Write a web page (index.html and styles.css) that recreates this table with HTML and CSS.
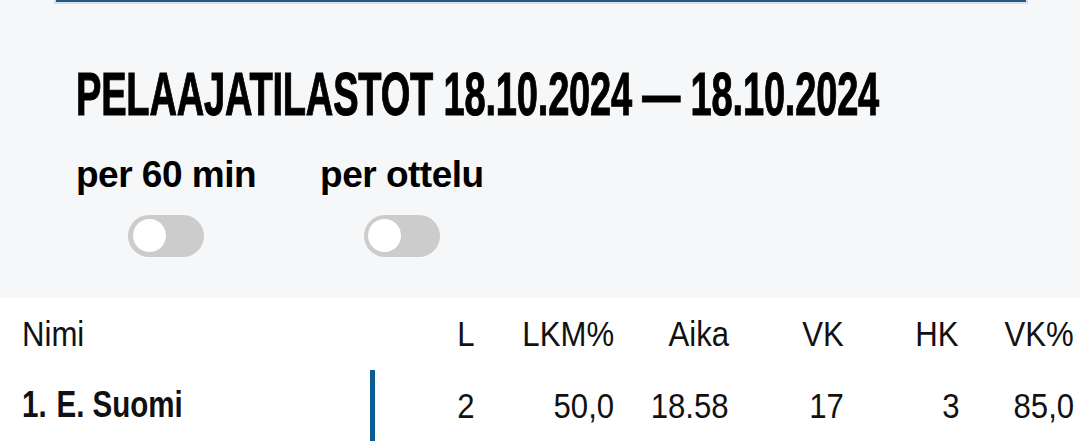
FILE: index.html
```html
<!DOCTYPE html>
<html lang="fi">
<head>
<meta charset="utf-8">
<title>Pelaajatilastot</title>
<link rel="stylesheet" href="styles.css">
</head>
<body>
<section class="stats-head">
  <div class="topbar"></div>
  <h1 class="title"><span class="title-text">PELAAJATILASTOT 18.10.2024 — 18.10.2024</span></h1>
  <div class="switches">
    <label class="switch">
      <span class="switch-label">per 60 min</span>
      <span class="track"><span class="knob"></span></span>
    </label>
    <label class="switch">
      <span class="switch-label">per ottelu</span>
      <span class="track"><span class="knob"></span></span>
    </label>
  </div>
</section>
<section class="table-wrap">
  <table class="stats">
    <colgroup>
      <col class="c-name"><col class="c-l"><col class="c-lkm"><col class="c-std"><col class="c-std"><col class="c-std"><col class="c-std">
    </colgroup>
    <thead>
      <tr>
        <th class="name"><span class="txt">Nimi</span></th>
        <th><span class="txt">L</span></th>
        <th><span class="txt">LKM%</span></th>
        <th><span class="txt">Aika</span></th>
        <th><span class="txt">VK</span></th>
        <th><span class="txt">HK</span></th>
        <th><span class="txt">VK%</span></th>
      </tr>
    </thead>
    <tbody>
      <tr>
        <td class="name"><span class="txt"><span class="rank">1.</span><span class="player">E. Suomi</span></span></td>
        <td><span class="txt">2</span></td>
        <td><span class="txt">50,0</span></td>
        <td><span class="txt">18.58</span></td>
        <td><span class="txt">17</span></td>
        <td><span class="txt">3</span></td>
        <td><span class="txt">85,0</span></td>
      </tr>
    </tbody>
  </table>
</section>
</body>
</html>
```

FILE: styles.css
```css
html, body {
  margin: 0;
  padding: 0;
  background: #ffffff;
  overflow: hidden;
}

body {
  font-family: "Liberation Sans", Arial, sans-serif;
  color: #111;
}

.stats-head {
  background: #f6f7f9;
  padding: 0 0 41px 76px;
}

.topbar {
  margin: 0 52px 0 -22px;
  height: 1.5px;
  background: #22588a;
  border: 2px solid #d7dee6;
  border-top: 0;
}

.title {
  margin: 70px 0 0 0;
  height: 40px;
  font-family: "Liberation Sans", Arial, sans-serif;
  font-weight: 700;
  font-size: 40px;
  line-height: 40px;
  color: #000;
  white-space: nowrap;
}

.title-text {
  display: inline-block;
  transform: scale(0.951, 1.52);
  transform-origin: left center;
  letter-spacing: -0.2px;
  -webkit-text-stroke: 0.7px #000;
}

.switches {
  display: flex;
  gap: 64px;
  margin-top: 42px;
}

.switch {
  display: flex;
  flex-direction: column;
  align-items: center;
  gap: 22px;
}

.switch-label {
  font-family: "Liberation Sans", Arial, sans-serif;
  font-weight: 700;
  font-size: 37px;
  line-height: 37px;
  letter-spacing: -0.5px;
  color: #000;
  white-space: nowrap;
}

.track {
  display: flex;
  align-items: center;
  box-sizing: border-box;
  width: 76px;
  height: 42px;
  padding: 0 4.5px;
  border-radius: 21px;
  background: #cccccc;
}

.knob {
  width: 33px;
  height: 33px;
  border-radius: 50%;
  background: #ffffff;
}

.table-wrap {
  overflow: hidden;
  background: #ffffff;
}

.stats {
  border-collapse: separate;
  border-spacing: 0;
  table-layout: fixed;
  width: 1080px;
}

.c-name { width: 375px; }
.c-l { width: 105px; }
.c-lkm { width: 140px; }
.c-std { width: 115px; }

.stats th,
.stats td {
  padding: 0 6px 0 0;
  height: 72px;
  text-align: right;
  font-size: 35px;
  line-height: 72px;
  font-weight: 400;
  white-space: nowrap;
  vertical-align: top;
}

.txt {
  display: inline-block;
  transform: scaleX(0.89);
  transform-origin: right center;
}

.stats th.name,
.stats td.name {
  text-align: left;
  padding-left: 22px;
  border-right: 5px solid transparent;
}

.stats th.name .txt,
.stats td.name .txt {
  transform-origin: left center;
}

.stats td.name {
  border-right-color: #0b5d92;
  font-weight: 700;
  font-size: 36px;
  line-height: 70px;
}

.stats td.name .txt {
  transform: scaleX(0.82);
}

.rank {
  margin-right: 12px;
}
```
